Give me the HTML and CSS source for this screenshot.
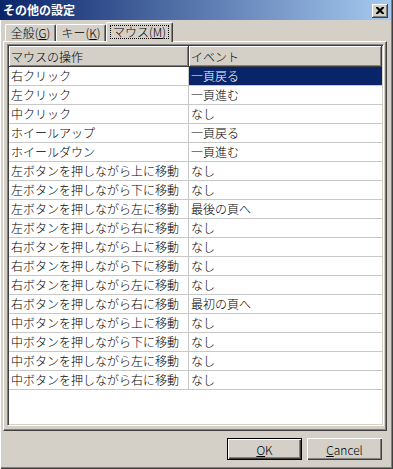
FILE: index.html
```html
<!DOCTYPE html>
<html lang="ja">
<head>
    <meta charset="UTF-8">
    <meta name="viewport" content="width=device-width, initial-scale=1.0">
    <title>その他の設定</title>
    <link rel="stylesheet" href="styles.css">
</head>
<body>
    <div class="window">
        <!-- タイトルバー -->
        <div class="titlebar">
            <span class="title">その他の設定</span>
            <span class="close">
                <svg width="8" height="7" viewBox="0 0 8 7">
                    <path d="M0 0h2l2 2 2-2h2v1l-2.5 2.5L8 6v1H6L4 5 2 7H0V6l2.5-2.5L0 1z" fill="#000"/>
                </svg>
            </span>
        </div>

        <!-- タブ -->
        <div class="tabs">
            <div class="tab">全般(<u>G</u>)</div>
            <div class="tab">キー(<u>K</u>)</div>
            <div class="tab active"><span class="focus">マウス(<u>M</u>)</span></div>
        </div>

        <div class="panel">
            <div class="listview">
                <table class="grid">
                    <colgroup>
                        <col class="col-op">
                        <col class="col-ev">
                    </colgroup>
                    <thead>
                        <tr>
                            <th>マウスの操作</th>
                            <th>イベント</th>
                        </tr>
                    </thead>
                    <tbody>
                        <tr><td>右クリック</td><td class="selected">一頁戻る</td></tr>
                        <tr><td>左クリック</td><td>一頁進む</td></tr>
                        <tr><td>中クリック</td><td>なし</td></tr>
                        <tr><td>ホイールアップ</td><td>一頁戻る</td></tr>
                        <tr><td>ホイールダウン</td><td>一頁進む</td></tr>
                        <tr><td>左ボタンを押しながら上に移動</td><td>なし</td></tr>
                        <tr><td>左ボタンを押しながら下に移動</td><td>なし</td></tr>
                        <tr><td>左ボタンを押しながら左に移動</td><td>最後の頁へ</td></tr>
                        <tr><td>左ボタンを押しながら右に移動</td><td>なし</td></tr>
                        <tr><td>右ボタンを押しながら上に移動</td><td>なし</td></tr>
                        <tr><td>右ボタンを押しながら下に移動</td><td>なし</td></tr>
                        <tr><td>右ボタンを押しながら左に移動</td><td>なし</td></tr>
                        <tr><td>右ボタンを押しながら右に移動</td><td>最初の頁へ</td></tr>
                        <tr><td>中ボタンを押しながら上に移動</td><td>なし</td></tr>
                        <tr><td>中ボタンを押しながら下に移動</td><td>なし</td></tr>
                        <tr><td>中ボタンを押しながら左に移動</td><td>なし</td></tr>
                        <tr><td>中ボタンを押しながら右に移動</td><td>なし</td></tr>
                    </tbody>
                </table>
            </div>
        </div>

        <div class="buttons">
            <button type="button" class="btn default"><u>O</u>K</button>
            <button type="button" class="btn"><u>C</u>ancel</button>
        </div>
    </div>
</body>
</html>
```

FILE: styles.css
```css
body {
    margin: 0;
    background-color: #d4d0c8;
    font-family: "Noto Sans CJK JP", "DejaVu Sans", sans-serif;
    font-size: 12px;
    font-weight: 300;
    color: #000;
}
.window {
    width: 393px;
    height: 469px;
    box-sizing: border-box;
    background-color: #d4d0c8;
    box-shadow: inset 1px 0 #fff, inset -1px -1px #404040, inset -2px -2px #808080;
}
.titlebar {
    width: 391px;
    height: 20px;
    display: flex;
    align-items: center;
    background: linear-gradient(to right, #0a246a, #a6caf0);
}
.title {
    margin-left: 3px;
    color: #fff;
    font-weight: bold;
    line-height: 20px;
}
.close {
    margin-left: auto;
    margin-right: 3px;
    margin-top: 1px;
    width: 16px;
    height: 14px;
    box-sizing: border-box;
    display: flex;
    align-items: center;
    justify-content: center;
    background-color: #d4d0c8;
    box-shadow: inset -1px -1px #404040, inset 1px 1px #fff, inset -2px -2px #808080;
}
.tabs {
    display: flex;
    align-items: flex-end;
    height: 19px;
    margin-top: 2px;
    padding-left: 5px;
    position: relative;
    z-index: 1;
}
.tab {
    height: 17px;
    box-sizing: border-box;
    display: flex;
    align-items: center;
    justify-content: center;
    line-height: 14px;
    border-top: 1px solid #fff;
    border-left: 1px solid #fff;
    border-right: 1px solid #404040;
    border-radius: 2px 2px 0 0;
    box-shadow: inset -1px 0 #808080;
}
.tab:nth-child(1) { width: 51px; }
.tab:nth-child(2) { width: 50px; }
.tab.active {
    width: 67px;
    height: 20px;
    margin-bottom: -1px;
    background-color: #d4d0c8;
}
.focus {
    display: block;
    padding: 0 2px;
    border: 1px dotted #000;
    line-height: 12px;
    margin-top: -1px;
}
.panel {
    margin-left: 3px;
    width: 384px;
    height: 390px;
    box-sizing: border-box;
    padding: 2px 0 0 3px;
    border-top: 1px solid #fff;
    border-left: 1px solid #fff;
    border-right: 1px solid #404040;
    border-bottom: 1px solid #404040;
    box-shadow: inset -1px -1px #808080;
}
.listview {
    width: 377px;
    height: 382px;
    box-sizing: border-box;
    background-color: #fff;
    border-top: 1px solid #808080;
    border-left: 1px solid #808080;
    border-right: 1px solid #fff;
    border-bottom: 1px solid #fff;
    box-shadow: inset 1px 1px #404040, inset -1px -1px #d4d0c8;
    padding: 1px;
    overflow: hidden;
}
.grid {
    width: 373px;
    table-layout: fixed;
    border-collapse: separate;
    border-spacing: 0;
}
.col-op { width: 180px; }
.col-ev { width: 193px; }
.grid th {
    height: 21px;
    box-sizing: border-box;
    padding: 0 0 0 2px;
    text-align: left;
    font-weight: 300;
    background-color: #d4d0c8;
    border-right: 1px solid #404040;
    border-bottom: 1px solid #404040;
    box-shadow: inset 1px 1px #fff, inset -1px -1px #808080;
    white-space: nowrap;
}
.grid td {
    height: 19px;
    box-sizing: border-box;
    padding: 0 0 0 2px;
    line-height: 18px;
    border-bottom: 1px solid #c8c8c8;
    white-space: nowrap;
    overflow: hidden;
}
.grid td:first-child {
    border-right: 1px solid #c8c8c8;
}
.grid td.selected {
    background-color: #0a246a;
    color: #fff;
}
.buttons {
    display: flex;
    justify-content: flex-end;
    gap: 5px;
    margin-top: 7px;
    padding-right: 11px;
}
.btn {
    width: 75px;
    height: 22px;
    padding: 0;
    font-family: "Noto Sans CJK JP", "DejaVu Sans", sans-serif;
    font-size: 12px;
    font-weight: 300;
    color: #000;
    background-color: #d4d0c8;
    border: none;
    box-shadow: inset 1px 1px #fff, inset -1px -1px #404040, inset -2px -2px #808080;
}
.btn.default {
    border: 1px solid #000;
    box-shadow: inset 1px 1px #fff, inset -1px -1px #404040, inset -2px -2px #808080;
}
```
